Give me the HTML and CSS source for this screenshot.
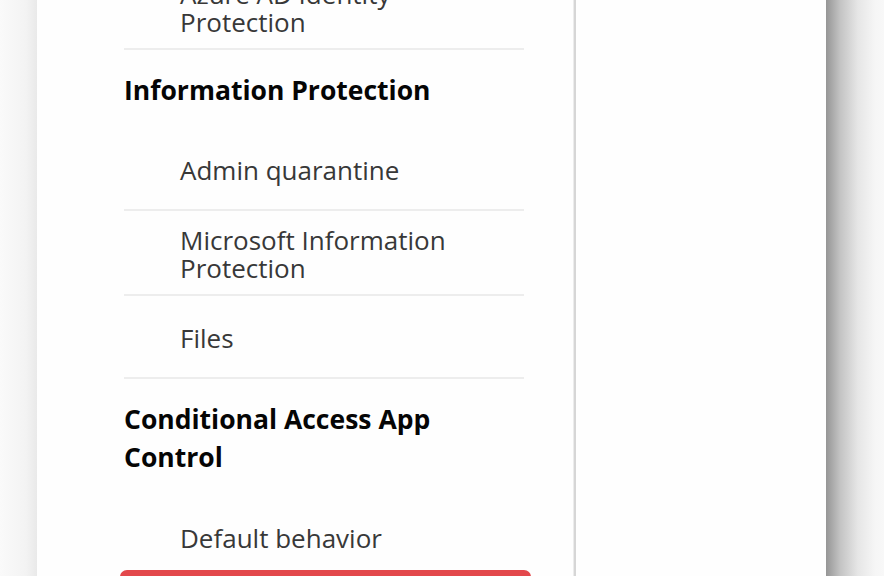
FILE: index.html
```html
<!DOCTYPE html>
<html lang="en">
<head>
<meta charset="utf-8">
<title>Settings navigation</title>
<link rel="stylesheet" href="styles.css">
</head>
<body>
<div class="frame">
  <div class="gutter"></div>
  <div class="panel">
    <nav class="nav">
      <div class="list">
        <div class="item">Azure AD Identity<br>Protection</div>
        <div class="heading">Information Protection</div>
        <div class="item">Admin quarantine</div>
        <div class="item">Microsoft Information<br>Protection</div>
        <div class="item">Files</div>
        <div class="heading">Conditional Access App<br>Control</div>
        <div class="item last">Default behavior</div>
        <div class="highlight"></div>
      </div>
    </nav>
    <div class="content"></div>
  </div>
  <div class="shadow"></div>
</div>
</body>
</html>
```
FILE: styles.css
```css
html, body {
  margin: 0;
  padding: 0;
  height: 100%;
  overflow: hidden;
}
body {
  font-family: "Open Sans", "Noto Sans", sans-serif;
  background: #f8f8f8;
}
.frame {
  display: flex;
  height: 576px;
}
.gutter {
  width: 37px;
  flex: none;
  background: linear-gradient(to right, #fafafa, #f3f3f3 70%, #e9e9e9);
}
.panel {
  width: 789px;
  flex: none;
  background: #fefefe;
  display: flex;
  overflow: hidden;
}
.shadow {
  flex: 1;
  background: linear-gradient(to right, #959595, #c4c4c4 25%, #e6e6e6 55%, #f6f6f6 85%, #f8f8f8);
}
.nav {
  width: 537px;
  flex: none;
  border-right: 2px solid #d6d6d6;
  box-shadow: -1px 0 0 #ececec inset;
  overflow: hidden;
}
.content {
  flex: 1;
}
.list {
  width: 400px;
  margin-left: 87px;
  margin-top: -35px;
}
.item {
  box-sizing: border-box;
  min-height: 83px;
  display: flex;
  align-items: center;
  padding: 15px 0 12px 56px;
  border-bottom: 2px solid #ededed;
  font-size: 26px;
  line-height: 28px;
  color: #383838;
}
.item.last {
  border-bottom: none;
  min-height: 75px;
  padding-top: 20px;
  padding-bottom: 10px;
}
.heading {
  padding: 21px 0 19px 0;
  font-size: 26.5px;
  line-height: 38px;
  font-weight: 700;
  color: #050505;
}
.highlight {
  height: 40px;
  margin: 0 -7px 0 -4px;
  background: #e3484c;
  border-radius: 7px 7px 0 0;
}
```
